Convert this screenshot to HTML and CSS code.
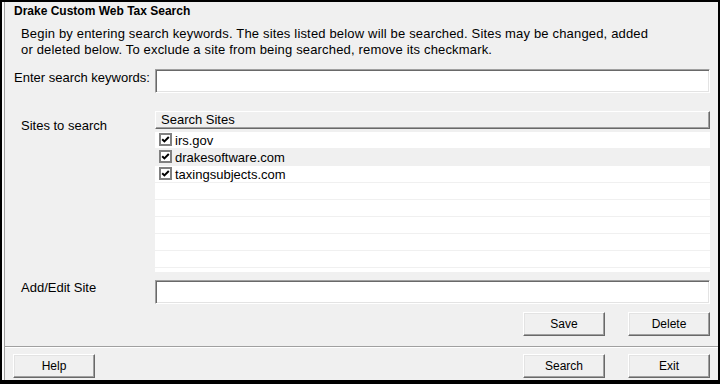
FILE: index.html
```html
<!DOCTYPE html>
<html>
<head>
<meta charset="utf-8">
<link rel="stylesheet" href="styles.css">
</head>
<body>
<div class="window">
  <div class="title">Drake Custom Web Tax Search</div>
  <p class="desc">Begin by entering search keywords. The sites listed below will be searched. Sites may be changed, added<br>or deleted below. To exclude a site from being searched, remove its checkmark.</p>

  <div class="form-row row-keywords">
    <label class="label label-keywords">Enter search keywords:</label>
    <div class="field"></div>
  </div>

  <div class="form-row row-sites">
    <div class="label label-indent label-sites">Sites to search</div>
    <div class="list">
      <div class="list-header">Search Sites</div>
      <div class="list-body">
        <div class="list-row"><span class="check"><svg width="9" height="9" viewBox="0 0 9 9"><path d="M1.2 4.2 L3.4 6.4 L7.8 2" fill="none" stroke="#000" stroke-width="2"/></svg></span><span class="site">irs.gov</span></div>
        <div class="list-row alt"><span class="check"><svg width="9" height="9" viewBox="0 0 9 9"><path d="M1.2 4.2 L3.4 6.4 L7.8 2" fill="none" stroke="#000" stroke-width="2"/></svg></span><span class="site">drakesoftware.com</span></div>
        <div class="list-row"><span class="check"><svg width="9" height="9" viewBox="0 0 9 9"><path d="M1.2 4.2 L3.4 6.4 L7.8 2" fill="none" stroke="#000" stroke-width="2"/></svg></span><span class="site">taxingsubjects.com</span></div>
        <div class="list-row"></div>
        <div class="list-row"></div>
        <div class="list-row"></div>
        <div class="list-row"></div>
        <div class="list-row"></div>
        <div class="list-row last"></div>
      </div>
    </div>
  </div>

  <div class="form-row row-edit">
    <div class="label label-indent label-edit">Add/Edit Site</div>
    <div class="field"></div>
  </div>

  <div class="edit-buttons">
    <button class="btn">Save</button>
    <button class="btn">Delete</button>
  </div>

  <div class="separator"></div>

  <div class="footer">
    <button class="btn">Help</button>
    <div class="footer-right">
      <button class="btn">Search</button>
      <button class="btn">Exit</button>
    </div>
  </div>
</div>
</body>
</html>
```

FILE: styles.css
```css
* { box-sizing: border-box; }

html, body {
  margin: 0;
  padding: 0;
  background: #000;
}

body {
  width: 720px;
  height: 384px;
  overflow: hidden;
  font-family: "Liberation Sans", Arial, sans-serif;
  font-size: 13px;
  color: #000;
}

.window {
  width: 720px;
  height: 384px;
  border-style: solid;
  border-color: #000;
  border-width: 2px 2px 4px 2px;
  background: #f0f0f0;
  box-shadow: inset 2px 0 0 #fbfbfb, inset 3px 0 0 #a0a0a0;
  display: flex;
  flex-direction: column;
}

.title {
  margin: 2px 0 0 12px;
  font-weight: bold;
  font-size: 12px;
  line-height: 14px;
}

.desc {
  margin: 8px 0 0 19px;
  line-height: 16px;
  letter-spacing: 0.17px;
}

.form-row {
  display: grid;
  grid-template-columns: 141px 555px;
  padding-left: 12px;
}

.row-keywords { margin-top: 11px; }
.row-sites { margin-top: 18px; }
.row-edit { margin-top: 8px; }

.label {
  line-height: 16px;
  white-space: nowrap;
}

.label-keywords { margin-top: 1px; }
.label-indent { padding-left: 7px; }
.label-sites { margin-top: 7px; }
.label-edit { margin-top: 0; }

.field {
  height: 24px;
  background: #fff;
  border-style: solid;
  border-width: 1px;
  border-color: #a0a0a0 #fff #fff #a0a0a0;
  box-shadow: inset 1px 1px 0 #696969, inset -1px -1px 0 #e3e3e3;
}

.list {
  height: 161px;
  display: flex;
  flex-direction: column;
}

.list-header {
  height: 18px;
  padding-left: 5px;
  line-height: 16px;
  background: #f0f0f0;
  border-style: solid;
  border-width: 1px;
  border-color: #fff #696969 #696969 #fff;
  box-shadow: inset -1px -1px 0 #a0a0a0;
}

.list-body {
  margin-top: 3px;
  overflow: hidden;
  flex: 1;
  background: #fff;
}

.list-row {
  height: 17px;
  padding-top: 1px;
  border-bottom: 1px solid #f0f0f0;
  display: flex;
  align-items: flex-start;
  background: #fff;
}

.list-row.alt { background: #f0f0f0; }

.check {
  width: 13px;
  height: 13px;
  margin-left: 4px;
  border: 2px solid #808080;
  background: #fff;
  display: flex;
}

.check svg { display: block; }

.site {
  margin-left: 3px;
  line-height: 15px;
}

.edit-buttons {
  margin-top: 8px;
  display: flex;
  justify-content: flex-end;
  gap: 23px;
  padding-right: 8px;
}

.btn {
  width: 82px;
  height: 24px;
  padding: 0;
  font-family: "Liberation Sans", Arial, sans-serif;
  font-size: 12px;
  color: #000;
  background: #f0f0f0;
  border-style: solid;
  border-width: 1px;
  border-color: #fff #696969 #696969 #fff;
  box-shadow: inset -1px -1px 0 #a0a0a0, inset 1px 1px 0 #e3e3e3;
}

.separator {
  margin-top: 10px;
  margin-left: 3px;
  height: 2px;
  border-top: 1px solid #a0a0a0;
  border-bottom: 1px solid #fff;
}

.footer {
  margin-top: 6px;
  display: flex;
  justify-content: space-between;
  padding-left: 11px;
  padding-right: 8px;
}

.footer-right {
  display: flex;
  gap: 23px;
}
```
